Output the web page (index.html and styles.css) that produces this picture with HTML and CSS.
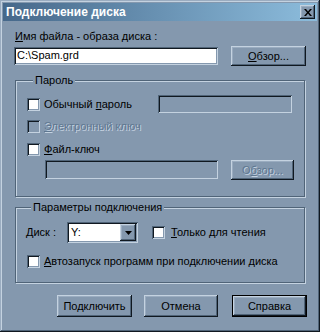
FILE: index.html
```html
<!DOCTYPE html>
<html lang="ru">
<head>
    <meta charset="UTF-8">
    <title>Подключение диска</title>
    <link rel="stylesheet" href="styles.css">
</head>
<body>
    <div class="window">
        <div class="titlebar">
            <span class="title">Подключение диска</span>
            <span class="close-btn">
                <svg width="8" height="7" viewBox="0 0 8 7"><path d="M0 0h2l2 2.5 2-2.5h2L5 3.5 8 7H6L4 4.5 2 7H0l3-3.5z" fill="#000"/></svg>
            </span>
        </div>

        <div class="content">
            <div class="field-label"><u>И</u>мя файла - образа диска :</div>
            <div class="row file-row">
                <div class="textbox file-path">C:\Spam.grd</div>
                <div class="btn browse-btn"><span><u>О</u>бзор...</span></div>
            </div>

            <!-- Password options -->
            <fieldset class="group password-group">
                <legend>Пароль</legend>
                <div class="row pw-row">
                    <div class="check"><span class="box"></span><span>Обычный <u>п</u>ароль</span></div>
                    <div class="textbox pw-box"></div>
                </div>
                <div class="row key-row">
                    <div class="check disabled"><span class="box"></span><span><u>Э</u>лектронный ключ</span></div>
                </div>
                <div class="row keyfile-row">
                    <div class="check"><span class="box"></span><span><u>Ф</u>айл-ключ</span></div>
                </div>
                <div class="row keypath-row">
                    <div class="textbox keypath-box"></div>
                    <div class="btn small-btn disabled"><span>О<u>б</u>зор...</span></div>
                </div>
            </fieldset>

            <!-- Mount options -->
            <fieldset class="group mount-group">
                <legend>Параметры подключения</legend>
                <div class="row drive-row">
                    <div class="drive-label"><u>Д</u>иск :</div>
                    <div class="combo">
                        <span class="combo-value">Y:</span>
                        <span class="combo-arrow">
                            <svg width="7" height="4" viewBox="0 0 7 4"><path d="M0 0h7L3.5 4z" fill="#000"/></svg>
                        </span>
                    </div>
                    <div class="check readonly"><span class="box"></span><span><u>Т</u>олько для чтения</span></div>
                </div>
                <div class="row autorun-row">
                    <div class="check"><span class="box"></span><span><u>А</u>втозапуск программ при подключении диска</span></div>
                </div>
            </fieldset>

            <div class="row buttons">
                <div class="btn">Подключить</div>
                <div class="btn cancel-btn">Отмена</div>
                <div class="btn default-btn">Справка</div>
            </div>
        </div>
    </div>
</body>
</html>
```

FILE: styles.css
```css
body {
    margin: 0;
    font-family: "Liberation Sans", Arial, sans-serif;
    font-size: 11px;
    line-height: 13px;
    color: #000;
    background: #8498ae;
}
u {
    text-decoration: underline;
    text-underline-offset: 1px;
}
.window {
    width: 320px;
    height: 332px;
    box-sizing: border-box;
    padding: 3px;
    background: #8498ae;
    box-shadow: inset -1px -1px #101820, inset 1px 1px #9aacc0,
                inset -2px -2px #506478, inset 2px 2px #c4d2e0;
}
.titlebar {
    height: 18px;
    display: flex;
    align-items: center;
    justify-content: space-between;
    padding: 0 2px 0 3px;
    background: linear-gradient(to right, #46688a, #8cbcdc);
}
.title {
    color: #fff;
    font-weight: bold;
    font-size: 12px;
}
.close-btn {
    width: 15px;
    height: 14px;
    box-sizing: border-box;
    display: flex;
    align-items: center;
    justify-content: center;
    background: #8498ae;
    box-shadow: inset -1px -1px #101820, inset 1px 1px #c4d2e0,
                inset -2px -2px #506478, inset 2px 2px #9aacc0;
}
.content {
    padding: 9px 10px 0 12px;
}
.row {
    display: flex;
    align-items: center;
}
.row > * {
    flex-shrink: 0;
}
.field-label {
    height: 13px;
}
.file-row {
    margin-top: 3px;
    height: 20px;
    margin-left: -1px;
}
.textbox {
    box-sizing: border-box;
    height: 18px;
    padding: 2px 3px;
    background: #fff;
    box-shadow: inset 1px 1px #506478, inset -1px -1px #c4d2e0,
                inset 2px 2px #101820, inset -2px -2px #8498ae;
}
.file-path {
    width: 204px;
}
.btn {
    box-sizing: border-box;
    width: 75px;
    height: 22px;
    display: flex;
    align-items: center;
    justify-content: center;
    background: #8498ae;
    box-shadow: inset -1px -1px #101820, inset 1px 1px #c4d2e0,
                inset -2px -2px #506478, inset 2px 2px #9aacc0;
}
.browse-btn {
    height: 20px;
    margin-left: 13px;
}
.group {
    width: 290px;
    box-sizing: border-box;
    margin: 0;
    padding: 0 0 0 11px;
    border: 1px solid #506478;
    box-shadow: inset 1px 1px #c4d2e0, 1px 1px #c4d2e0;
}
.group legend {
    padding: 0 2px;
    margin-left: 6px;
    background: #8498ae;
    line-height: 13px;
}
.password-group {
    margin-top: 8px;
    padding-bottom: 16px;
}
.mount-group {
    margin-top: 4px;
    padding-bottom: 14px;
}
.mount-group legend {
    margin-left: 4px;
}
.check {
    display: flex;
    align-items: center;
    gap: 4px;
    white-space: nowrap;
}
.box {
    width: 13px;
    height: 13px;
    box-sizing: border-box;
    background: #fff;
    box-shadow: inset 1px 1px #506478, inset -1px -1px #c4d2e0,
                inset 2px 2px #101820, inset -2px -2px #8498ae;
}
.check.disabled {
    color: #5f7790;
}
.check.disabled span:last-child {
    text-shadow: 1px 1px #c4d2e0;
}
.check.disabled .box {
    background: #8498ae;
}
.pw-row {
    margin-top: 8px;
    height: 18px;
}
.pw-box {
    width: 134px;
    margin-left: auto;
    margin-right: 12px;
    background: #8498ae;
}
.key-row {
    margin-top: 7px;
    height: 13px;
}
.keyfile-row {
    margin-top: 10px;
    height: 13px;
}
.keypath-row {
    margin-top: 4px;
    margin-left: 18px;
    height: 20px;
    align-items: flex-start;
}
.keypath-box {
    width: 173px;
    height: 19px;
    background: #8498ae;
}
.small-btn {
    width: 63px;
    height: 20px;
    margin-left: 13px;
}
.btn.disabled {
    color: #5f7790;
    text-shadow: 1px 1px #c4d2e0;
}
.drive-row {
    margin-top: 8px;
    height: 21px;
}
.drive-label {
    width: 41px;
    margin-left: -1px;
}
.combo {
    width: 71px;
    height: 21px;
    box-sizing: border-box;
    display: flex;
    align-items: center;
    justify-content: space-between;
    padding: 2px;
    background: #fff;
    box-shadow: inset 1px 1px #506478, inset -1px -1px #c4d2e0,
                inset 2px 2px #101820, inset -2px -2px #8498ae;
}
.combo-value {
    padding-left: 2px;
}
.combo-arrow {
    width: 16px;
    height: 17px;
    box-sizing: border-box;
    display: flex;
    align-items: center;
    justify-content: center;
    background: #8498ae;
    box-shadow: inset -1px -1px #101820, inset 1px 1px #c4d2e0,
                inset -2px -2px #506478, inset 2px 2px #9aacc0;
}
.readonly {
    margin-left: 14px;
    gap: 6px;
}
.autorun-row {
    margin-top: 12px;
    height: 13px;
}
.buttons {
    justify-content: flex-end;
    margin-top: 12px;
    gap: 12px;
}
.cancel-btn {
    width: 74px;
    margin-right: 2px;
}
.default-btn {
    border: 1px solid #000;
    box-shadow: inset -1px -1px #101820, inset 1px 1px #c4d2e0,
                inset -2px -2px #506478, inset 2px 2px #9aacc0;
}
```
